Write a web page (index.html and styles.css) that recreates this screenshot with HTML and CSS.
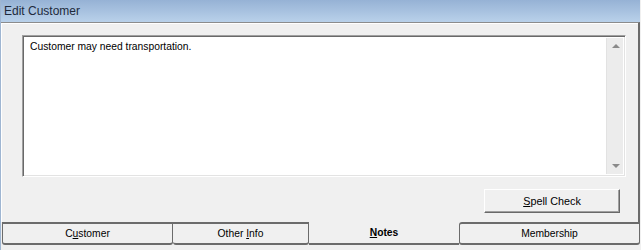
FILE: index.html
```html
<!DOCTYPE html>
<html lang="en">
<head>
    <meta charset="UTF-8">
    <title>Edit Customer</title>
    <link rel="stylesheet" href="styles.css">
</head>
<body>
    <div class="window">
        <div class="titlebar">Edit Customer</div>

        <!-- Notes tab page -->
        <div class="panel">
            <div class="notes">
                <div class="notes-text">Customer may need transportation.</div>
                <div class="scrollbar">
                    <span class="arrow up"></span>
                    <span class="arrow down"></span>
                </div>
            </div>
            <button class="btn"><u>S</u>pell Check</button>
        </div>

        <div class="tabs">
            <div class="tab tab-customer">C<u>u</u>stomer</div>
            <div class="tab tab-other">Other <u>I</u>nfo</div>
            <div class="tab tab-notes active"><u>N</u>otes</div>
            <div class="tab tab-member">Membership</div>
        </div>
    </div>
</body>
</html>
```

FILE: styles.css
```css
body {
    margin: 0;
    width: 641px;
    height: 250px;
    overflow: hidden;
    background-color: #f0f0f0;
    font-family: "Liberation Sans", Arial, sans-serif;
    font-size: 10.3px;
    color: #000;
}
.window {
    display: flex;
    flex-direction: column;
    height: 250px;
    border-left: 1px solid #9fb6d2;
    border-right: 1px solid #f0f0f0;
}
.titlebar {
    height: 22px;
    line-height: 22px;
    padding-left: 3px;
    font-size: 12px;
    color: #1e2a3c;
    background: linear-gradient(#96b2d5, #b9d1ea);
}

/* tab page */
.panel {
    display: flex;
    flex-direction: column;
    height: 200px;
    padding: 12px 0 0 21px;
    border-top: 1px solid #8c8c8c;
    border-right: 2px solid #6b6b6b;
    box-shadow: inset 1px 1px #ffffff;
    box-sizing: border-box;
}
.notes {
    display: flex;
    width: 604px;
    height: 142px;
    box-sizing: border-box;
    background: #ffffff;
    border-top: 1px solid #a0a0a0;
    border-left: 1px solid #a0a0a0;
    border-bottom: 1px solid #ffffff;
    border-right: 1px solid #ffffff;
    box-shadow: inset 1px 1px #696969, inset -1px -1px #e3e3e3;
}
.notes-text {
    flex: 1;
    padding: 5px 0 0 7px;
}
.scrollbar {
    position: relative;
    width: 16px;
    margin: 2px 2px 2px 0;
    background: #ececec;
    border-left: 1px solid #e2e2e2;
}
.arrow {
    position: absolute;
    left: 5px;
    width: 0;
    height: 0;
    border-left: 4px solid transparent;
    border-right: 4px solid transparent;
}
.arrow.up {
    top: 6px;
    border-bottom: 4px solid #8a8a8a;
}
.arrow.down {
    bottom: 6px;
    border-top: 4px solid #8a8a8a;
}
.btn {
    align-self: flex-end;
    width: 136px;
    height: 24px;
    margin: 12px 18px 0 0;
    padding: 0;
    font-family: inherit;
    font-size: 10.8px;
    color: #000;
    background: #f0f0f0;
    border-top: 1px solid #ffffff;
    border-left: 1px solid #ffffff;
    border-bottom: 1px solid #696969;
    border-right: 1px solid #696969;
    box-shadow: inset -1px -1px #a0a0a0;
}

/* tabs at the bottom */
.tabs {
    display: flex;
    height: 23px;
    padding-left: 1px;
}
.tab {
    box-sizing: border-box;
    height: 23px;
    line-height: 19px;
    text-align: center;
    border-top: 2px solid #6b6b6b;
    border-bottom: 2px solid #6b6b6b;
    border-right: 1px solid #6b6b6b;
    border-radius: 0 0 3px 3px;
}
.tab-customer {
    width: 171px;
    border-left: 1px solid #6b6b6b;
}
.tab-other {
    width: 136px;
}
.tab-notes {
    width: 150px;
    border-right: none;
}
.tab-member {
    flex: 1;
    border-left: 1px solid #6b6b6b;
    border-radius: 3px 0 3px 3px;
}
.tab.active {
    border-top: none;
    border-radius: 0;
    font-weight: bold;
    line-height: 20px;
    padding-top: 1px;
}
```
